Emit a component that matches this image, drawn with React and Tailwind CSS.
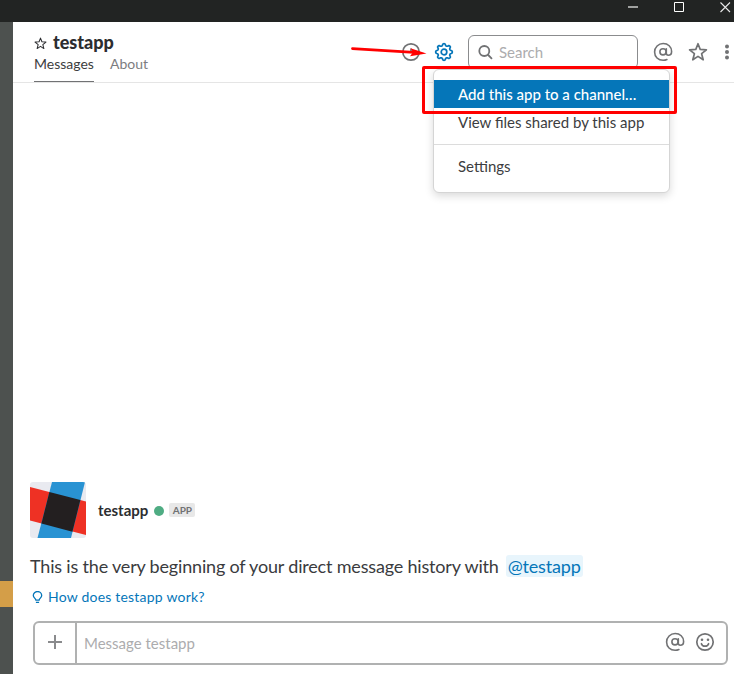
import React from "react";

// Eight-toothed outline with softly rounded teeth.
const gearPath =
  Array.from({ length: 96 }, (_, i) => {
    const a = (i / 96) * Math.PI * 2;
    const wave = Math.tanh(1.8 * Math.cos(8 * a)) / Math.tanh(1.8);
    const r = 7.35 + 0.95 * wave;
    return `${i ? "L" : "M"}${(10 + r * Math.sin(a)).toFixed(2)} ${(10 - r * Math.cos(a)).toFixed(2)}`;
  }).join("") + "Z";

function Gear() {
  return (
    <svg className="block size-5 shrink-0" viewBox="0 0 20 20" fill="none" stroke="#0576b9" strokeWidth="1.7" strokeLinejoin="round">
      <path d={gearPath} />
      <circle cx="10" cy="10" r="2.8" />
    </svg>
  );
}

function At() {
  return (
    <svg className="block size-5 shrink-0" viewBox="0 0 20 20" fill="none" stroke="#717274" strokeWidth="1.6" strokeLinecap="round">
      <circle cx="10" cy="9.8" r="3.1" />
      <path d="M13.3 6.700v4.600c0 1.300.7 1.900 1.900 1.900 2.100 0 3.400-1.500 3.400-3.800C18.600 4.800 15 1.500 10.200 1.500S1.600 5.200 1.600 10s3.600 8.300 8.500 8.300c1.400 0 2.700-.3 3.800-.8" />
    </svg>
  );
}

function Star({ className, stroke, width }) {
  return (
    <svg className={className} viewBox="0 0 20 20" fill="none" stroke={stroke} strokeWidth={width} strokeLinejoin="round">
      <path d="M10 1.700L12.200 7.400L18.400 7.800L13.600 11.700L15.200 17.800L10 14.400L4.800 17.800L6.400 11.700L1.600 7.800L7.800 7.400Z" />
    </svg>
  );
}

function TitleBar() {
  return (
    <div className="flex h-[22px] shrink-0 justify-end bg-[#222423]">
      <svg className="block h-[22px] w-[110px]" viewBox="0 0 110 22" fill="none">
        <path d="M4 7h10" stroke="#a0a1a0" strokeWidth="2" />
        <path d="M50.500 2.500h9v9h-9z" stroke="#fff" />
        <path d="M96.500 2.500l9.500 9.500M106 2.500L96.500 12" stroke="#e8e8e8" strokeWidth="1.100" />
      </svg>
    </div>
  );
}

function Menu() {
  return (
    <div className="absolute left-[433px] top-[69px] h-[124px] w-[237px] rounded-md border border-[#d5d5d5] bg-white pt-[10px] text-[15px] text-[#3c3d40] shadow-[0_3px_8px_rgba(0,0,0,0.15)]">
      <div className="flex h-7 items-center whitespace-nowrap bg-[#0576b9] pl-6 font-medium text-white">
        <span>Add this app to a channel…</span>
      </div>
      <div className="flex h-7 items-center whitespace-nowrap pl-6">
        <span>View files shared by this app</span>
      </div>
      <div className="mt-2 h-px bg-[#dcdcdc]" />
      <div className="mt-[7px] flex h-7 items-center pl-6">
        <span>Settings</span>
      </div>
    </div>
  );
}

function Header() {
  return (
    <header className="flex h-[61px] shrink-0 justify-between border-b border-[#e5e5e5] pl-[21px]">
      <div className="pt-[9px]">
        <div className="flex h-[22px] items-center">
          <Star className="mt-[2px] block size-[13px]" stroke="#2c2d30" width="1.600" />
          <h1 className="ml-[6px] text-[18px] leading-[22px] font-black text-[#2c2d30]">testapp</h1>
        </div>
        <nav className="mt-px flex text-[14px] leading-5">
          <div className="h-[28px] w-[60px] border-b border-[#717274] text-[#3c3d40]">Messages</div>
          <div className="ml-4 text-[#7c7d7f]">About</div>
        </nav>
      </div>
      <div className="mt-[13px] flex h-[34px] items-center">
        <svg className="block size-5" viewBox="0 0 20 20" fill="none" stroke="#717274" strokeWidth="1.700">
          <circle cx="10" cy="10" r="8.200" />
          <path d="M10 6.500v3.500h4" />
        </svg>
        <div className="ml-[13px]"><Gear /></div>
        <div className="ml-[14px] flex h-[34px] w-[170px] items-center rounded-md border border-[#8b8c8e] pl-[9px]">
          <svg className="block size-4" viewBox="0 0 16 16" fill="none" stroke="#717274" strokeWidth="1.800" strokeLinecap="round">
            <circle cx="6.300" cy="7" r="5" />
            <path d="M10.200 11l3.300 3.300" />
          </svg>
          <span className="ml-[5px] text-[15px] text-[#acacae]">Search</span>
        </div>
        <div className="ml-[15px]"><At /></div>
        <Star className="ml-[15px] block size-5" stroke="#717274" width="1.700" />
        <svg className="ml-[13px] block h-5 w-[13px]" viewBox="0 0 13 20" fill="#717274">
          <circle cx="6" cy="4.500" r="2" />
          <circle cx="6" cy="10" r="2" />
          <circle cx="6" cy="15.500" r="2" />
        </svg>
      </div>
    </header>
  );
}

function Avatar() {
  return (
    <svg className="block size-14 rounded-[3px]" viewBox="0 0 56 56">
      <path fill="#e9eaf0" d="M0 0h56v56H0z" />
      <path fill="#ee3124" d="M0 5L56 19.500V53L0 38.500z" />
      <path fill="#2993d3" d="M22 0H55L41 56H7.500z" />
      <path fill="#231f20" d="M19.400 10.100L50.400 18.100L42.400 49.700L11.400 41.500z" />
    </svg>
  );
}

function Composer() {
  return (
    <div className="ml-5 mt-[15px] flex h-11 w-[695px] rounded-md border-2 border-[#b0b1b1] bg-white">
      <div className="flex w-[42px] items-center justify-center border-r-2 border-[#b0b1b1]">
        <svg className="block size-4" viewBox="0 0 16 16" stroke="#8a8b8d" strokeWidth="2">
          <path d="M8 0v14M1 7h14" />
        </svg>
      </div>
      <div className="flex flex-1 items-center pl-[7px] text-[15px] text-[#acacae]">Message testapp</div>
      <div className="flex items-center gap-[10px] pr-[11px] pb-[2px]">
        <At />
        <svg className="block size-5" viewBox="0 0 20 20" fill="none" stroke="#717274" strokeWidth="1.700" strokeLinecap="round">
          <circle cx="10" cy="10" r="8.200" />
          <path d="M6.400 11.700c.5 1.700 1.900 2.500 3.600 2.500s3.100-.8 3.600-2.500" />
          <circle cx="7" cy="7.800" r="1.300" fill="#717274" stroke="none" />
          <circle cx="13" cy="7.800" r="1.300" fill="#717274" stroke="none" />
        </svg>
      </div>
    </div>
  );
}

function Annotations() {
  return (
    <>
      <div className="absolute left-[422px] top-[66px] h-[48px] w-[255px] rounded-[2px] border-[3px] border-[#ff0000]" />
      <svg className="absolute left-[348px] top-[42px] block h-5 w-20" viewBox="0 0 80 20">
        <path d="M4.500 6.600L66 10.300" stroke="#ff0000" strokeWidth="2.800" strokeLinecap="round" />
        <path d="M62.500 6.200L78.500 11.500L62 14.300L65 10.300z" fill="#ff0000" />
      </svg>
    </>
  );
}

export default function App() {
  return (
    <div className="relative flex h-[674px] w-[734px] flex-col overflow-hidden bg-white font-[Lato,sans-serif] text-[#2c2d30]">
      <TitleBar />
      <div className="flex min-h-0 flex-1">
        <aside className="flex w-[13px] shrink-0 flex-col bg-[#4d514f]">
          <div className="mt-[559px] h-[26px] bg-[#d49e48]" />
        </aside>
        <main className="flex min-w-0 flex-1 flex-col">
          <Header />
          <div className="flex flex-1 flex-col justify-end pb-[9px]">
            <div className="ml-[17px] flex items-center">
              <Avatar />
              <span className="ml-3 text-[15px] font-bold">testapp</span>
              <span className="ml-[6px] mt-[2px] size-[10px] rounded-full bg-[#4fac83]" />
              <span className="ml-[5px] flex h-[14px] w-[26px] items-center justify-center rounded-[2px] bg-[#e8e8e8] text-[10px] font-bold text-[#717274]">APP</span>
            </div>
            <p className="ml-[17px] mt-[15px] flex h-[26px] items-center whitespace-nowrap text-[18px] tracking-[-0.18px] text-[#3a3b3e]">
              <span>This is the very beginning of your direct message history with</span>
              <span className="ml-[7px] flex h-[22px] w-[77px] items-center rounded-[3px] bg-[#e8f5fc] pl-[2px] text-[#0576b9]">@testapp</span>
            </p>
            <div className="ml-[19px] mt-[7px] flex h-5 items-center text-[14px] tracking-[0.21px] text-[#0576b9]">
              <svg className="mt-[3px] block h-[13px] w-[11px]" viewBox="0 0 11 13" fill="none" stroke="#0576b9" strokeWidth="1.300">
                <path d="M3.900 9.200C3.900 7.400 1.300 6.700 1.300 4.600a4.200 4.100 0 0 1 8.400 0C9.700 6.700 7.100 7.400 7.100 9.200zM3.900 11.400h3.200" />
              </svg>
              <span className="ml-[5px]">How does testapp work?</span>
            </div>
            <Composer />
          </div>
        </main>
      </div>
      <Menu />
      <Annotations />
    </div>
  );
}
